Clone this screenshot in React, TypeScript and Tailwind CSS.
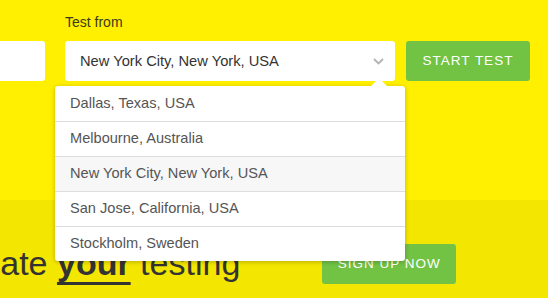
const cities = [
  'Dallas, Texas, USA',
  'Melbourne, Australia',
  'New York City, New York, USA',
  'San Jose, California, USA',
  'Stockholm, Sweden'
];

function Chevron() {
  return (
    <svg width="11" height="7" viewBox="0 0 11 7" fill="none">
      <path d="M1 1l4.5 4.5L10 1" stroke="#b3b3b3" strokeWidth="1.8" />
    </svg>
  );
}

export default function App() {
  const selected = 'New York City, New York, USA';

  return (
    <div className="w-[548px] h-[298px] overflow-hidden font-['Liberation_Sans',Arial,sans-serif] text-[#333]">
      {/* test form */}
      <div className="h-[200px] bg-[#ffef00] pt-[12px]">
        <div className="flex items-end ml-[-155px]">
          <div className="w-[200px] h-[40px] bg-white rounded-[3px]"></div>
          <div className="w-[330px] ml-[20px]">
            <label className="block text-[14px] leading-[20px] mb-[9px] text-[#3a3a1a]">Test from</label>
            <div className="relative">
              <div className="h-[40px] bg-white rounded-[3px] flex items-center justify-between pl-[15px] pr-[11px]">
                <span className="text-[14.7px] text-[#333]">{selected}</span>
                <Chevron />
              </div>
              <div className="absolute top-[45px] left-[-10px] w-[350px] bg-white rounded-[3px] shadow-[0_1px_4px_rgba(0,0,0,0.25)] z-10">
                <div className="absolute top-[-8px] left-[316px] w-0 h-0 border-x-[8px] border-b-[8px] border-transparent border-b-white"></div>
                {cities.map((city, i) => (
                  <div
                    key={city}
                    className={
                      'h-[35px] flex items-center pl-[15px] text-[14.6px] text-[#555] ' +
                      (i === 0 ? 'h-[34px] ' : 'border-t border-[#dedede] ') +
                      (city === selected ? 'bg-[#f7f7f7]' : '')
                    }
                  >
                    {city}
                  </div>
                ))}
              </div>
            </div>
          </div>
          <button className="ml-[11px] w-[124px] h-[40px] bg-[#72c244] rounded-[3px] text-white text-[13.5px] tracking-[1px] font-medium">
            START TEST
          </button>
        </div>
      </div>

      {/* sign up banner */}
      <div className="h-[98px] bg-[#f3e600] pt-[44px] flex items-start">
        <h2 className="ml-[-98px] mt-[-1px] text-[34px] leading-[40px] whitespace-nowrap text-[#333]">
          Automate <span className="font-bold underline decoration-[3px] underline-offset-[7px]">your</span> testing
        </h2>
        <button className="ml-[82px] w-[134px] h-[40px] shrink-0 bg-[#72c244] rounded-[3px] text-white text-[13.5px] tracking-[1px] font-medium">
          SIGN UP NOW
        </button>
      </div>
    </div>
  );
}
